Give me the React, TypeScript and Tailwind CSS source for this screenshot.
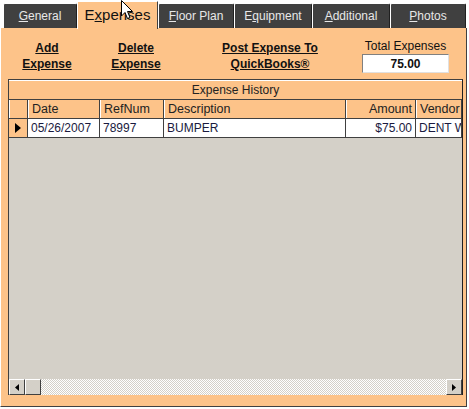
import React from 'react';

// Expenses tab of a vehicle record form (WinForms look)

const TABS = [
  { label: 'General', key: 'G', rest: 'eneral', w: 'w-[74px]' },
  { label: 'Expenses', key: 'x', pre: 'E', rest: 'penses', w: 'w-[81px]', active: true },
  { label: 'Floor Plan', key: 'F', rest: 'loor Plan', w: 'w-[76px]' },
  { label: 'Equipment', key: 'q', pre: 'E', rest: 'uipment', w: 'w-[78px]' },
  { label: 'Additional', key: 'A', rest: 'dditional', w: 'w-[78px]' },
  { label: 'Photos', key: 'P', rest: 'hotos', w: 'w-[76px]' },
];

const COLS = [
  { name: 'Date', w: 'w-[72px]', right: false },
  { name: 'RefNum', w: 'w-[64px]', right: false },
  { name: 'Description', w: 'w-[182px]', right: false },
  { name: 'Amount', w: 'w-[70px]', right: true },
  { name: 'Vendor', w: 'flex-1', right: false },
];

const ROW = ['05/26/2007', '78997', 'BUMPER', '$75.00', 'DENT WIZARD'];

const LinkButton = ({ lines }: { lines: string[] }) => (
  <div className="flex flex-col items-center font-bold text-[12px] leading-[16px] text-[#111] underline">
    {lines.map((l) => (
      <span key={l}>{l}</span>
    ))}
  </div>
);

export default function App() {
  return (
    <div
      className="relative w-[469px] h-[409px] bg-white overflow-hidden text-[12px]"
      style={{ fontFamily: '"Liberation Sans", Arial, sans-serif' }}
    >
      {/* tab strip */}
      <div className="flex items-end h-[28px] pl-[3px]">
        {TABS.map((t) =>
          t.active ? (
            <div
              key={t.label}
              className={`${t.w} h-[28px] bg-[#fdc389] border-t border-l border-white border-r border-r-[#404040] flex items-center justify-center text-[15px] text-[#111] relative z-10 -mb-[1px]`}
            >
              <span>
                {t.pre}
                <span className="underline">{t.key}</span>
                {t.rest}
              </span>
            </div>
          ) : (
            <div
              key={t.label}
              className={`${t.w} h-[25px] bg-[#404040] border-t border-l border-white border-r border-r-[#202020] rounded-tl-[2px] rounded-tr-[2px] flex items-center justify-center text-[12px] text-[#e8e8e8]`}
            >
              <span>
                {t.pre}
                <span className="underline">{t.key}</span>
                {t.rest}
              </span>
            </div>
          )
        )}
      </div>

      {/* panel */}
      <div className="w-[467px] h-[379px] bg-[#fdc389] border-l border-l-white border-r border-r-[#404040] border-b border-b-[#404040] flex flex-col pt-[12px]">
        <div className="flex items-start h-[39px]">
          <div className="w-[92px] flex justify-center">
            <LinkButton lines={['Add', 'Expense']} />
          </div>
          <div className="w-[86px] flex justify-center">
            <LinkButton lines={['Delete', 'Expense']} />
          </div>
          <div className="w-[182px] flex justify-center">
            <LinkButton lines={['Post Expense To', 'QuickBooks®']} />
          </div>
          <div className="flex flex-col items-center ml-[1px] -mt-[1px]">
            <span className="text-[12px] leading-[15px] text-[#111]">Total Expenses</span>
            <div className="w-[87px] h-[19px] bg-white border border-[#808080] border-r-[#e0e0e0] border-b-[#e0e0e0] flex items-center justify-center font-bold text-[12px] text-[#111]">
              75.00
            </div>
          </div>
        </div>

        {/* grid */}
        <div className="ml-[7px] w-[455px] h-[316px] border-t border-l border-[#404040] border-r border-r-[#202020] flex flex-col bg-[#d4d0c8]">
          <div className="h-[20px] bg-[#fdc389] border-b border-[#404040] border-t border-t-white flex items-center justify-center text-[#222]">
            Expense History
          </div>
          <div className="flex h-[19px] bg-[#fdc389] border-b border-[#404040]">
            <div className="w-[19px] border-r border-[#404040] border-l border-l-white" />
            {COLS.map((c) => (
              <div
                key={c.name}
                className={`${c.w} border-r border-[#404040] border-l border-l-white px-[3px] flex items-center text-[12.5px] text-[#222] whitespace-nowrap overflow-hidden ${c.right ? 'justify-end' : ''}`}
              >
                {c.name}
              </div>
            ))}
          </div>
          <div className="flex h-[19px] bg-white border-b border-[#404040]">
            <div className="w-[19px] bg-[#fdc389] border-r border-[#404040] flex items-center justify-center">
              <svg width="6" height="10" viewBox="0 0 6 10">
                <path d="M0 0 L6 5 L0 10 Z" fill="#000" />
              </svg>
            </div>
            {COLS.map((c, i) => (
              <div
                key={c.name}
                className={`${c.w} border-r border-[#404040] px-[3px] flex items-center text-[12px] text-[#1a1a40] whitespace-nowrap overflow-hidden ${c.right ? 'justify-end' : ''}`}
              >
                {ROW[i]}
              </div>
            ))}
          </div>
          <div className="flex-1" />
          {/* horizontal scrollbar */}
          <div className="flex h-[16px] bg-[repeating-conic-gradient(#ffffff_0_25%,#d4d0c8_0_50%)] bg-[length:2px_2px]">
            <div className="w-[16px] h-[16px] bg-[#d4d0c8] border border-t-white border-l-white border-r-[#404040] border-b-[#404040] flex items-center justify-center">
              <svg width="4" height="7" viewBox="0 0 4 7">
                <path d="M4 0 L0 3.5 L4 7 Z" fill="#000" />
              </svg>
            </div>
            <div className="w-[16px] h-[16px] bg-[#d4d0c8] border border-t-white border-l-white border-r-[#404040] border-b-[#404040]" />
            <div className="flex-1" />
            <div className="w-[16px] h-[16px] bg-[#d4d0c8] border border-t-white border-l-white border-r-[#404040] border-b-[#404040] flex items-center justify-center">
              <svg width="4" height="7" viewBox="0 0 4 7">
                <path d="M0 0 L4 3.5 L0 7 Z" fill="#000" />
              </svg>
            </div>
          </div>
        </div>
      </div>

      {/* mouse pointer */}
      <svg className="absolute left-[121px] top-0 z-20" width="13" height="20" viewBox="0 0 13 20">
        <path d="M0.5 0.5 L0.5 16 L4 12.5 L6.5 18.5 L9 17.5 L6.5 11.5 L11.5 11.5 Z" fill="#fff" stroke="#000" strokeWidth="1" />
      </svg>
    </div>
  );
}
